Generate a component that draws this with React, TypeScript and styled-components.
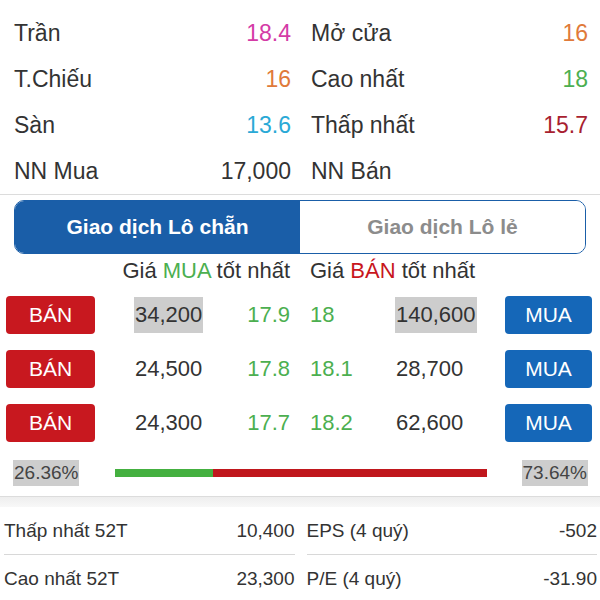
import React from "react";
import styled, { createGlobalStyle } from "styled-components";

const GlobalStyle = createGlobalStyle`
  body {
    margin: 0;
    background: #fff;
    color: #333;
    font-family: "Liberation Sans", Arial, Helvetica, sans-serif;
  }
`;

const Page = styled.div`
  width: 600px;
  height: 600px;
  overflow: hidden;
  background: #fff;
`;

/* top price summary */
const Summary = styled.div`
  display: grid;
  grid-template-columns: 1fr 1fr;
  column-gap: 20px;
  padding: 10px 12px 0 14px;
  border-bottom: 1px solid #dcdcdc;
`;

const SummaryCell = styled.div`
  height: 46px;
  display: flex;
  align-items: center;
  justify-content: space-between;
  font-size: 23px;
  color: #333;
`;

const Value = styled.span<{ $color?: string }>`
  color: ${({ $color }) => $color || "#333"};
`;

/* lot toggle */
const Toggle = styled.div`
  margin: 5px 14px 0;
  height: 54px;
  box-sizing: border-box;
  display: grid;
  grid-template-columns: 1fr 1fr;
  border: 1.5px solid #1a5ea8;
  border-radius: 10px;
  overflow: hidden;
`;

const ToggleItem = styled.div<{ $active?: boolean }>`
  display: flex;
  align-items: center;
  justify-content: center;
  font-size: 21px;
  font-weight: bold;
  background: ${({ $active }) => ($active ? "#1a5ea8" : "#fff")};
  color: ${({ $active }) => ($active ? "#fff" : "#8c8c8c")};
`;

/* order book */
const BookHeader = styled.div`
  height: 34px;
  display: grid;
  grid-template-columns: 1fr 1fr;
  align-items: center;
  font-size: 22px;
  color: #333;
  span.left {
    text-align: right;
    padding-right: 10px;
  }
  span.right {
    padding-left: 10px;
  }
`;

const Buy = styled.span`
  color: #4caf50;
`;
const Sell = styled.span`
  color: #c8161d;
`;

const BookRow = styled.div`
  height: 54px;
  display: grid;
  grid-template-columns: 89px 106px 99px 94px 111px 87px;
  align-items: center;
  padding: 0 8px 0 6px;
  font-size: 22px;
`;

const ActionButton = styled.div<{ $kind: "buy" | "sell" }>`
  height: 38px;
  border-radius: 4px;
  display: flex;
  align-items: center;
  justify-content: center;
  color: #fff;
  font-size: 21px;
  background: ${({ $kind }) => ($kind === "buy" ? "#1567b8" : "#c8181f")};
`;

const Qty = styled.div<{ $side: "left" | "right" }>`
  padding-left: ${({ $side }) => ($side === "left" ? "39px" : "1px")};
  color: #333;
`;

const QtyText = styled.span<{ $hl?: boolean }>`
  display: inline-block;
  line-height: 36px;
  padding: 0 1px;
  background: ${({ $hl }) => ($hl ? "#cdcdcd" : "transparent")};
`;

const Price = styled.div<{ $side: "left" | "right" }>`
  color: #4caf50;
  text-align: ${({ $side }) => ($side === "left" ? "right" : "left")};
  padding-left: ${({ $side }) => ($side === "right" ? "10px" : "0")};
  padding-right: ${({ $side }) => ($side === "left" ? "10px" : "0")};
`;

const RatioRow = styled.div`
  height: 46px;
  display: grid;
  grid-template-columns: 102px 372px 1fr;
  align-items: center;
  padding: 0 12px 0 13px;
  font-size: 19px;
  color: #444;
`;

const RatioBox = styled.span<{ $end?: boolean }>`
  justify-self: ${({ $end }) => ($end ? "end" : "start")};
  background: #cdcdcd;
  line-height: 26px;
  padding: 0 1px;
`;

const Bar = styled.div`
  height: 8px;
  display: flex;
  background: #c0171d;
`;

const BarFill = styled.div`
  height: 100%;
  background: #44b040;
`;

/* bottom stats */
const Band = styled.div`
  height: 10px;
  border-top: 1px solid #dcdcdc;
  background: linear-gradient(#eeeeee, #f8f8f8);
`;

const Stats = styled.div`
  display: grid;
  grid-template-columns: 1fr 1fr;
  column-gap: 12px;
  padding: 0 3px 0 4px;
`;

const StatCell = styled.div<{ $line?: boolean }>`
  height: 47px;
  display: flex;
  align-items: center;
  justify-content: space-between;
  font-size: 19px;
  color: #333;
  border-bottom: ${({ $line }) => ($line ? "1px solid #d8d8d8" : "none")};
`;

const summary = [
  ["Trần", "18.4", "#d43ba6"],
  ["Mở cửa", "16", "#e07a3a"],
  ["T.Chiếu", "16", "#e07a3a"],
  ["Cao nhất", "18", "#4caf50"],
  ["Sàn", "13.6", "#2aa9d6"],
  ["Thấp nhất", "15.7", "#a81f30"],
  ["NN Mua", "17,000", "#333"],
  ["NN Bán", "", "#333"],
];

const book = [
  { bidQty: "34,200", bid: "17.9", ask: "18", askQty: "140,600", hl: true },
  { bidQty: "24,500", bid: "17.8", ask: "18.1", askQty: "28,700" },
  { bidQty: "24,300", bid: "17.7", ask: "18.2", askQty: "62,600" },
];

const stats = [
  ["Thấp nhất 52T", "10,400"],
  ["EPS (4 quý)", "-502"],
  ["Cao nhất 52T", "23,300"],
  ["P/E (4 quý)", "-31.90"],
];

export default function App() {
  const buyRatio = 26.36;
  return (
    <Page>
      <GlobalStyle />
      <Summary>
        {summary.map(([label, val, color]) => (
          <SummaryCell key={label}>
            <span>{label}</span>
            <Value $color={color}>{val}</Value>
          </SummaryCell>
        ))}
      </Summary>

      <Toggle>
        <ToggleItem $active>Giao dịch Lô chẵn</ToggleItem>
        <ToggleItem>Giao dịch Lô lẻ</ToggleItem>
      </Toggle>

      <BookHeader>
        <span className="left">
          Giá <Buy>MUA</Buy> tốt nhất
        </span>
        <span className="right">
          Giá <Sell>BÁN</Sell> tốt nhất
        </span>
      </BookHeader>

      {book.map((r) => (
        <BookRow key={r.bid}>
          <ActionButton $kind="sell">BÁN</ActionButton>
          <Qty $side="left">
            <QtyText $hl={r.hl}>{r.bidQty}</QtyText>
          </Qty>
          <Price $side="left">{r.bid}</Price>
          <Price $side="right">{r.ask}</Price>
          <Qty $side="right">
            <QtyText $hl={r.hl}>{r.askQty}</QtyText>
          </Qty>
          <ActionButton $kind="buy">MUA</ActionButton>
        </BookRow>
      ))}

      <RatioRow>
        <RatioBox>{buyRatio.toFixed(2)}%</RatioBox>
        <Bar>
          <BarFill style={{ width: `${buyRatio}%` }} />
        </Bar>
        <RatioBox $end>{(100 - buyRatio).toFixed(2)}%</RatioBox>
      </RatioRow>

      <Band />
      <Stats>
        {stats.map(([label, val], i) => (
          <StatCell key={label} $line={i < 2}>
            <span>{label}</span>
            <span>{val}</span>
          </StatCell>
        ))}
      </Stats>
    </Page>
  );
}
